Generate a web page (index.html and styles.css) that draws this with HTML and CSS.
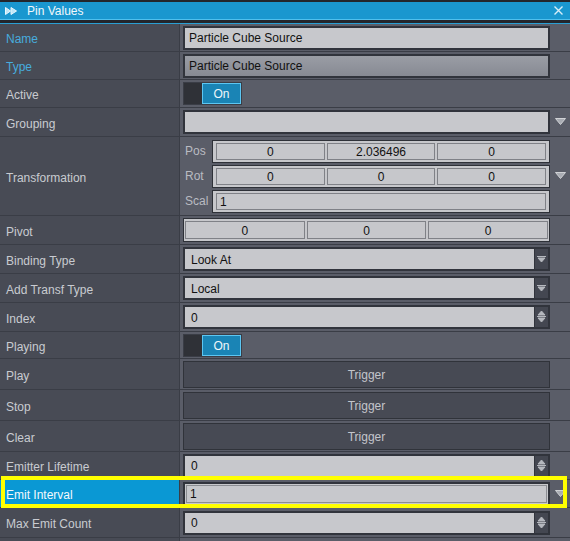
FILE: index.html
```html
<!DOCTYPE html>
<html lang="en">
<head>
    <meta charset="UTF-8">
    <title>Pin Values</title>
    <link rel="stylesheet" href="styles.css">
</head>
<body>
    <div class="panel">
        <div class="titlebar">
            <svg class="title-icon" width="12" height="8" viewBox="0 0 12 8">
                <path d="M0.5 0.5 L5.5 4 L0.5 7.5 Z M6 0.5 L11.5 4 L6 7.5 Z" fill="#bfe6f7" stroke="#e8f6fc" stroke-width="1"/>
            </svg>
            <span class="title-text">Pin Values</span>
            <svg class="close-icon" width="9" height="9" viewBox="0 0 9 9">
                <path d="M0.5 0.5 L8.5 8.5 M8.5 0.5 L0.5 8.5" stroke="#d8eef8" stroke-width="1.4"/>
            </svg>
        </div>
        <div class="rule"></div>

        <div class="row h28">
            <div class="label key">Name</div>
            <div class="value"><div class="field">Particle Cube Source</div></div>
        </div>
        <div class="row h28">
            <div class="label key">Type</div>
            <div class="value"><div class="field readonly">Particle Cube Source</div></div>
        </div>
        <div class="row h28">
            <div class="label">Active</div>
            <div class="value">
                <div class="toggle"><span class="toggle-off"></span><span class="toggle-on">On</span></div>
            </div>
        </div>
        <div class="row h29">
            <div class="label">Grouping</div>
            <div class="value">
                <div class="field"></div>
                <svg class="drop" width="11" height="7" viewBox="0 0 11 7"><path d="M0.5 0.5 H10.5 L5.5 6.5 Z" fill="#a9acb3" stroke="#d0d2d6" stroke-width="1"/></svg>
            </div>
        </div>
        <div class="row h79">
            <div class="label">Transformation</div>
            <div class="value">
                <div class="vec-grid">
                    <span class="sub">Pos</span>
                    <div class="vec"><span class="cell">0</span><span class="cell">2.036496</span><span class="cell">0</span></div>
                    <span class="sub">Rot</span>
                    <div class="vec"><span class="cell">0</span><span class="cell">0</span><span class="cell">0</span></div>
                    <span class="sub">Scal</span>
                    <div class="vec"><span class="cell left">1</span></div>
                </div>
                <svg class="drop" width="11" height="7" viewBox="0 0 11 7"><path d="M0.5 0.5 H10.5 L5.5 6.5 Z" fill="#a9acb3" stroke="#d0d2d6" stroke-width="1"/></svg>
            </div>
        </div>
        <div class="row h29">
            <div class="label">Pivot</div>
            <div class="value">
                <div class="vec wide"><span class="cell">0</span><span class="cell">0</span><span class="cell">0</span></div>
            </div>
        </div>
        <div class="row h29">
            <div class="label">Binding Type</div>
            <div class="value">
                <div class="field select">Look At
                    <span class="btn"><svg width="9" height="7" viewBox="0 0 9 7"><path d="M0 0.5 H9 M1 2 H8 L4.5 6 Z" fill="#b5b8be" stroke="#b5b8be" stroke-width="1"/></svg></span>
                </div>
            </div>
        </div>
        <div class="row h29">
            <div class="label">Add Transf Type</div>
            <div class="value">
                <div class="field select">Local
                    <span class="btn"><svg width="9" height="7" viewBox="0 0 9 7"><path d="M0 0.5 H9 M1 2 H8 L4.5 6 Z" fill="#b5b8be" stroke="#b5b8be" stroke-width="1"/></svg></span>
                </div>
            </div>
        </div>
        <div class="row h29">
            <div class="label">Index</div>
            <div class="value">
                <div class="field select">0
                    <span class="btn"><svg width="9" height="14" viewBox="0 0 9 14"><path d="M4.5 1 L8 5 H1 Z M0 6.5 H9 M1 8 H8 L4.5 12 Z" fill="#b5b8be" stroke="#b5b8be" stroke-width="1"/></svg></span>
                </div>
            </div>
        </div>
        <div class="row h27">
            <div class="label">Playing</div>
            <div class="value">
                <div class="toggle"><span class="toggle-off"></span><span class="toggle-on">On</span></div>
            </div>
        </div>
        <div class="row h31">
            <div class="label">Play</div>
            <div class="value"><div class="trigger">Trigger</div></div>
        </div>
        <div class="row h31">
            <div class="label">Stop</div>
            <div class="value"><div class="trigger">Trigger</div></div>
        </div>
        <div class="row h31">
            <div class="label">Clear</div>
            <div class="value"><div class="trigger">Trigger</div></div>
        </div>
        <div class="row h28">
            <div class="label">Emitter Lifetime</div>
            <div class="value">
                <div class="field select">0
                    <span class="btn"><svg width="9" height="14" viewBox="0 0 9 14"><path d="M4.5 1 L8 5 H1 Z M0 6.5 H9 M1 8 H8 L4.5 12 Z" fill="#b5b8be" stroke="#b5b8be" stroke-width="1"/></svg></span>
                </div>
            </div>
        </div>
        <div class="row h28 selected">
            <div class="label">Emit Interval</div>
            <div class="value">
                <div class="field inset"><span class="inner">1</span></div>
                <svg class="drop" width="11" height="7" viewBox="0 0 11 7"><path d="M0.5 0.5 H10.5 L5.5 6.5 Z" fill="#a9acb3" stroke="#d0d2d6" stroke-width="1"/></svg>
            </div>
        </div>
        <div class="row h30">
            <div class="label">Max Emit Count</div>
            <div class="value">
                <div class="field select">0
                    <span class="btn"><svg width="9" height="14" viewBox="0 0 9 14"><path d="M4.5 1 L8 5 H1 Z M0 6.5 H9 M1 8 H8 L4.5 12 Z" fill="#b5b8be" stroke="#b5b8be" stroke-width="1"/></svg></span>
                </div>
            </div>
        </div>
        <div class="row h28">
            <div class="label"></div>
            <div class="value"></div>
        </div>
    </div>
</body>
</html>
```

FILE: styles.css
```css
body {
    margin: 0;
    padding: 0;
    background-color: #5a5d68;
    font-family: "Liberation Sans", Arial, sans-serif;
    font-size: 12px;
    overflow: hidden;
}
.panel {
    width: 570px;
    height: 541px;
    overflow: hidden;
    background-color: #5a5d68;
}
.titlebar {
    height: 17px;
    border-top: 2px solid #23262c;
    border-bottom: 1px solid #4fc0ee;
    background-color: #1a97cf;
    display: flex;
    align-items: center;
    color: #f2f8fb;
}
.title-icon {
    margin-left: 5px;
}
.title-text {
    margin-left: 10px;
    font-size: 12px;
}
.close-icon {
    margin-left: auto;
    margin-right: 7px;
}
.rule {
    height: 3px;
    background-color: #23262c;
    border-bottom: 1px solid #2a9fd3;
}
.row {
    display: flex;
    box-sizing: border-box;
    border-bottom: 1px solid #3a3d46;
    position: relative;
}
.h27 { height: 27px; }
.h28 { height: 28px; }
.h29 { height: 29px; }
.h30 { height: 30px; }
.h31 { height: 31px; }
.h79 { height: 79px; }
.label {
    width: 180px;
    flex-shrink: 0;
    box-sizing: border-box;
    border-right: 1px solid #3a3d46;
    background-color: #484b55;
    color: #c9cbd1;
    padding-left: 6px;
    padding-top: 3px;
    display: flex;
    align-items: center;
}
.label.key {
    color: #47acde;
}
.value {
    flex: 1;
    display: flex;
    align-items: center;
    padding-left: 3px;
    padding-right: 20px;
    position: relative;
}
.field {
    flex: 1;
    height: 24px;
    box-sizing: border-box;
    border: 2px solid #31343c;
    background-color: #c7c8cc;
    color: #111;
    display: flex;
    align-items: center;
    padding-left: 4px;
    padding-top: 1px;
    position: relative;
}
.field.readonly {
    background: linear-gradient(to bottom, #9a9da5, #878a93);
}
.field.select {
    padding-left: 6px;
}
.field.select .btn {
    position: absolute;
    right: 0;
    top: 0;
    bottom: 0;
    width: 13px;
    background-color: #444751;
    border-left: 1px solid #31343c;
    display: flex;
    align-items: center;
    justify-content: center;
}
.field.inset {
    padding: 1px;
}
.field.inset .inner {
    flex: 1;
    height: 100%;
    box-sizing: border-box;
    border: 1px solid #8b8d92;
    padding-left: 3px;
    padding-top: 1px;
    display: flex;
    align-items: center;
}
.drop {
    position: absolute;
    right: 4px;
    top: 50%;
    margin-top: -4px;
}
.toggle {
    display: flex;
    height: 23px;
    width: 59px;
    box-sizing: border-box;
    border: 1px solid #3a3d46;
}
.toggle-off {
    width: 18px;
    background-color: #2f3137;
}
.toggle-on {
    flex: 1;
    background-color: #1a84b5;
    border: 1px solid #5cc6f2;
    color: #eef6fa;
    display: flex;
    align-items: center;
    justify-content: center;
    padding-top: 1px;
}
.trigger {
    flex: 1;
    height: 27px;
    box-sizing: border-box;
    border: 1px solid #30333a;
    background-color: #474a54;
    color: #c3c5cb;
    display: flex;
    align-items: center;
    justify-content: center;
    padding-top: 2px;
}
.vec-grid {
    flex: 1;
    display: grid;
    grid-template-columns: 29px 1fr;
    row-gap: 2px;
    align-items: center;
}
.sub {
    color: #b9bbc2;
    padding-left: 2px;
}
.vec {
    height: 23px;
    box-sizing: border-box;
    border: 1px solid #2e3138;
    background-color: #c6c7cb;
    display: flex;
    gap: 2px;
    padding: 2px 3px;
}
.vec.wide {
    flex: 1;
    height: 24px;
    padding: 2px 1px;
}
.cell {
    flex: 1;
    box-sizing: border-box;
    border: 1px solid #7f8187;
    color: #111;
    display: flex;
    align-items: center;
    justify-content: center;
    padding-top: 1px;
}
.cell.left {
    justify-content: flex-start;
    padding-left: 3px;
}
.selected .label {
    background-color: #0a98d4;
    color: #f4f9fc;
}
.selected::after {
    content: "";
    position: absolute;
    left: 1px;
    top: -4px;
    right: 3px;
    bottom: -1px;
    border: 4px solid #ffff00;
    pointer-events: none;
}
```
